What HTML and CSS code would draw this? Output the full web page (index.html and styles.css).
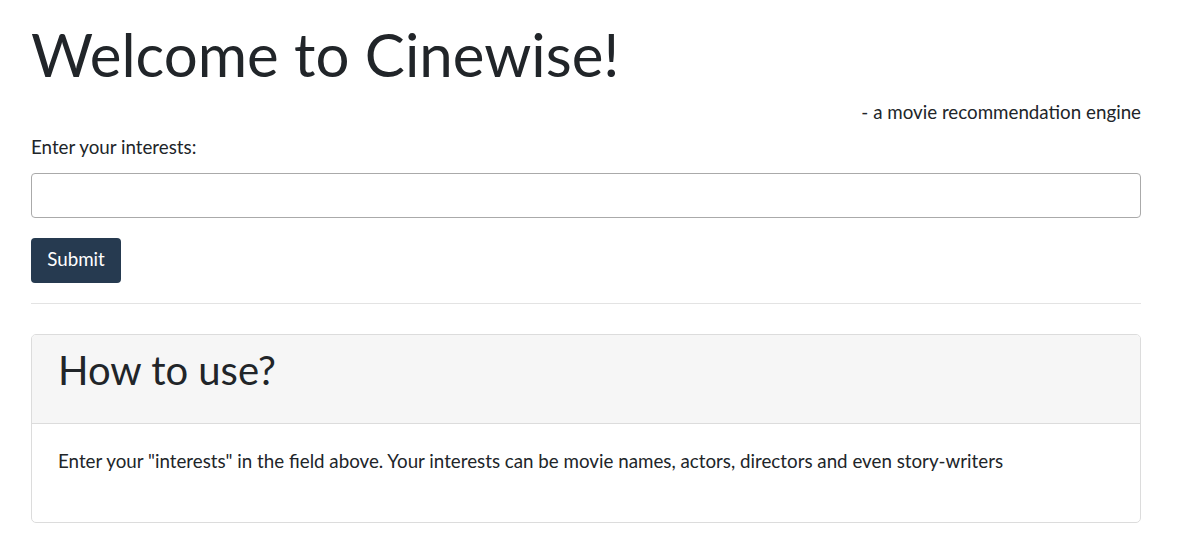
FILE: index.html
```html
<!DOCTYPE html>
<html>
<head>
<meta charset="utf-8">
<link rel="stylesheet" href="styles.css">
</head>
<body>
<div class="container">
  <h1 class="title">Welcome to Cinewise!</h1>
  <p class="tagline">- a movie recommendation engine</p>
  <form class="form">
    <label class="label" for="q">Enter your interests:</label>
    <input class="input" id="q" type="text">
    <button class="btn" type="button">Submit</button>
  </form>
  <hr class="rule">
  <div class="card">
    <div class="card-header"><h2 class="card-title">How to use?</h2></div>
    <div class="card-body">Enter your "interests" in the field above. Your interests can be movie names, actors, directors and even story-writers</div>
  </div>
</div>
</body>
</html>
```

FILE: styles.css
```css
* { box-sizing: border-box; }
body {
  margin: 0;
  font-family: Lato, "Noto Sans", sans-serif;
  color: #212529;
  background: #fff;
  font-size: 18.75px;
  line-height: 28px;
}
.container {
  width: 1110px;
  margin-left: 31px;
}
.title {
  font-weight: 400;
  font-size: 60px;
  line-height: 72px;
  margin: 18px 0 0 0;
}
.tagline {
  text-align: right;
  margin: 8px 0 0 0;
}
.form { display: flex; flex-direction: column; align-items: flex-start; }
.label { margin-top: 7px; }
.input {
  margin-top: 12px;
  width: 100%;
  height: 45px;
  border: 1px solid #aaa;
  border-radius: 4px;
  font: inherit;
  padding: 6px 12px;
}
.btn {
  margin-top: 20px;
  height: 45px;
  width: 90px;
  background: #263a50;
  color: #fff;
  border: 0;
  border-radius: 4px;
  font: inherit;
  padding: 0 0 4px 0;
}
.rule {
  border: 0;
  border-top: 1px solid #e3e3e3;
  margin: 20px 0 30px 0;
}
.card {
  border: 1px solid #dcdcdc;
  border-radius: 5px;
  overflow: hidden;
}
.card-header {
  background: #f6f6f6;
  border-bottom: 1px solid #dcdcdc;
  height: 89px;
  padding: 11px 26px 0 26px;
}
.card-title {
  font-weight: 400;
  font-size: 40px;
  margin: 0;
  line-height: 48px;
}
.card-body {
  padding: 23px 26px 47px 26px;
}
```
